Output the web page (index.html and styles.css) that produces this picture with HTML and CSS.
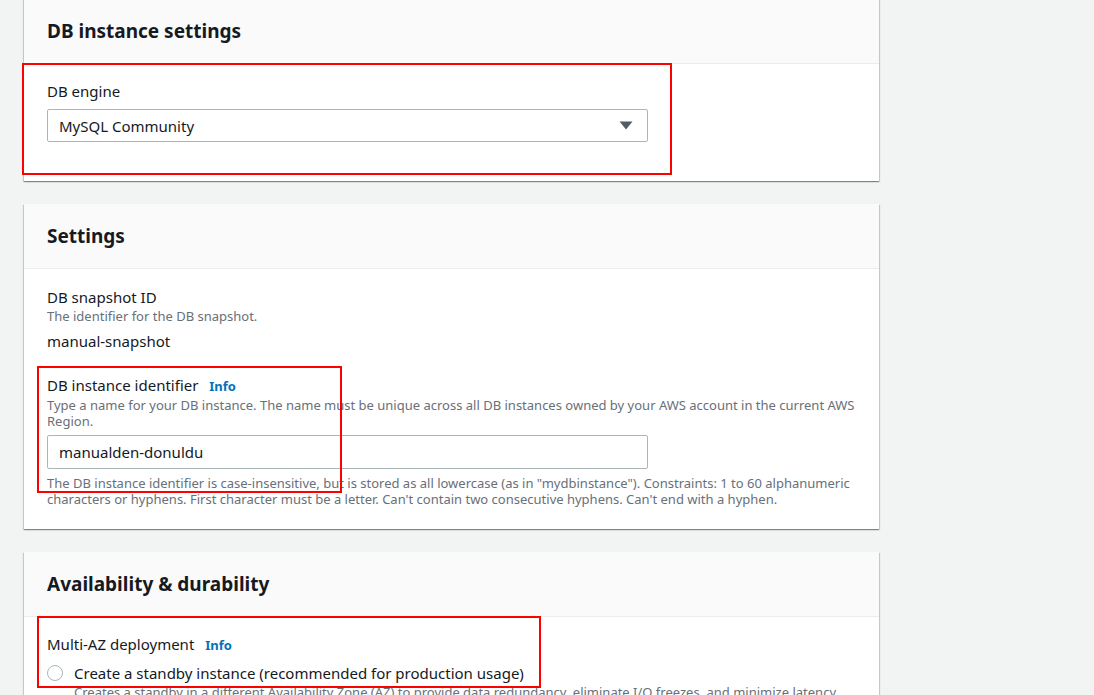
FILE: index.html
```html
<!DOCTYPE html>
<html lang="en">
<head>
<meta charset="utf-8">
<title>DB instance settings</title>
<link rel="stylesheet" href="styles.css">
</head>
<body>
<div class="page">
  <section class="card card-first">
    <header class="card-header"><h2>DB instance settings</h2></header>
    <div class="card-body body-engine">
      <div class="label">DB engine</div>
      <div class="select">
        <span>MySQL Community</span>
        <svg class="caret" width="14" height="9" viewBox="0 0 14 9"><path d="M0.5 0.5 H13.5 L7 8.5 Z" fill="#545b64"/></svg>
      </div>
    </div>
  </section>

  <section class="card">
    <header class="card-header"><h2>Settings</h2></header>
    <div class="card-body body-settings">
      <div class="field">
        <div class="label">DB snapshot ID</div>
        <div class="desc">The identifier for the DB snapshot.</div>
        <div class="value">manual-snapshot</div>
      </div>
      <div class="field field-ident">
        <div class="label">DB instance identifier <a class="info">Info</a></div>
        <div class="desc">Type a name for your DB instance. The name must be unique across all DB instances owned by your AWS account in the current AWS Region.</div>
        <div class="input">manualden-donuldu</div>
        <div class="desc constraint">The DB instance identifier is case-insensitive, but is stored as all lowercase (as in "mydbinstance"). Constraints: 1 to 60 alphanumeric characters or hyphens. First character must be a letter. Can't contain two consecutive hyphens. Can't end with a hyphen.</div>
      </div>
    </div>
  </section>

  <section class="card">
    <header class="card-header"><h2>Availability &amp; durability</h2></header>
    <div class="card-body body-az">
      <div class="label">Multi-AZ deployment <a class="info">Info</a></div>
      <div class="radio-row">
        <span class="radio"></span>
        <span class="radio-label">Create a standby instance (recommended for production usage)</span>
      </div>
      <div class="desc radio-desc">Creates a standby in a different Availability Zone (AZ) to provide data redundancy, eliminate I/O freezes, and minimize latency spikes during system backups.</div>
    </div>
  </section>

  <div class="mark mark-1"></div>
  <div class="mark mark-2"></div>
  <div class="mark mark-3"></div>
</div>
</body>
</html>
```

FILE: styles.css
```css
html, body {
  margin: 0;
  padding: 0;
  background: #f2f3f3;
  font-family: "Noto Sans", "Open Sans", sans-serif;
  color: #16191f;
  overflow: hidden;
}

.page {
  position: relative;
  width: 855px;
  margin-left: 24px;
}

.card {
  background: #ffffff;
  box-shadow: 0 1px 1px 0 rgba(0, 28, 36, 0.3), 1px 1px 1px 0 rgba(0, 28, 36, 0.15), -1px 1px 1px 0 rgba(0, 28, 36, 0.15);
  margin-bottom: 23px;
}

.card-first {
  margin-top: -1px;
}

.card-header {
  background: #fafafa;
  border-bottom: 1px solid #eaeded;
  padding: 20px 23px 19px;
}

.card-header h2 {
  margin: 0;
  font-size: 19px;
  line-height: 25px;
  font-weight: 700;
}

.card-body {
  padding: 18px 23px 22px;
}

.label {
  font-size: 15px;
  line-height: 20px;
}

.info {
  color: #0073bb;
  font-weight: 700;
  font-size: 13px;
  margin-left: 7px;
}

.desc {
  font-size: 13px;
  line-height: 16px;
  color: #687078;
  margin-top: 1px;
}

.body-engine {
  padding-top: 17px;
  padding-bottom: 39px;
}

.body-engine .label {
  margin-bottom: 8px;
}

.select {
  width: 601px;
  height: 33px;
  box-sizing: border-box;
  border: 1px solid #aab7b8;
  border-radius: 2px;
  display: flex;
  align-items: center;
  justify-content: space-between;
  padding: 0 14px 0 11px;
  font-size: 15px;
}

.caret {
  display: block;
}

.value {
  font-size: 15px;
  line-height: 20px;
  margin-top: 7px;
}

.field-ident {
  margin-top: 24px;
}

.input {
  width: 601px;
  height: 34px;
  box-sizing: border-box;
  border: 1px solid #aab7b8;
  border-radius: 2px;
  margin-top: 6px;
  padding: 0 11px;
  display: flex;
  align-items: center;
  font-size: 15px;
}

.constraint {
  margin-top: 6px;
}

.body-az {
  padding-top: 17px;
}

.radio-row {
  display: flex;
  align-items: center;
  margin-top: 8px;
  height: 20px;
}

.radio {
  width: 14px;
  height: 14px;
  border: 1px solid #aab7b8;
  border-radius: 50%;
  margin-right: 11px;
  flex: none;
}

.radio-label {
  font-size: 15px;
  line-height: 20px;
}

.radio-desc {
  margin-left: 27px;
  margin-top: 1px;
}

.mark {
  position: absolute;
  border: 2px solid #ff0000;
  box-sizing: border-box;
  pointer-events: none;
}

.mark-1 {
  left: -2px;
  top: 64px;
  width: 650px;
  height: 112px;
}

.mark-2 {
  left: 13px;
  top: 367px;
  width: 305px;
  height: 127px;
}

.mark-3 {
  left: 13px;
  top: 617px;
  width: 504px;
  height: 72px;
}
```
